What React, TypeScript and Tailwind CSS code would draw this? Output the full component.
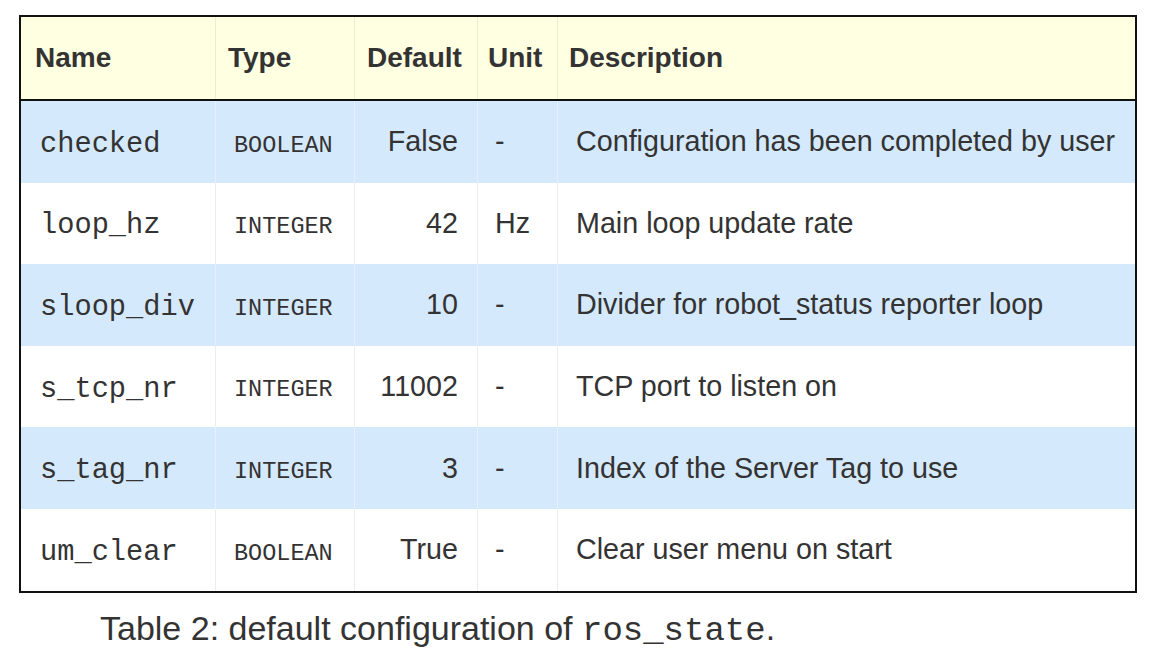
const rows = [
  { name: 'checked', type: 'boolean', def: 'False', unit: '-', desc: 'Configuration has been completed by user' },
  { name: 'loop_hz', type: 'integer', def: '42', unit: 'Hz', desc: 'Main loop update rate' },
  { name: 'sloop_div', type: 'integer', def: '10', unit: '-', desc: 'Divider for robot_status reporter loop' },
  { name: 's_tcp_nr', type: 'integer', def: '11002', unit: '-', desc: 'TCP port to listen on' },
  { name: 's_tag_nr', type: 'integer', def: '3', unit: '-', desc: 'Index of the Server Tag to use' },
  { name: 'um_clear', type: 'boolean', def: 'True', unit: '-', desc: 'Clear user menu on start' },
];

const sans = "font-['Liberation_Sans',Arial,sans-serif]";
const mono = "font-['Liberation_Mono','Courier_New',monospace]";

export default function App() {
  return (
    <div className={`min-h-[656px] w-[1156px] bg-white pt-[15px] text-[#333] ${sans}`}>
      <div className="ml-[19px] w-[1118px] border-[2.5px] border-[#111]">
        {/* Header */}
        <div className="grid h-[84px] grid-cols-[194px_139px_123px_80px_1fr] border-b-2 border-[#111] bg-[#ffffe1] text-[28px] font-bold">
          <div className="flex items-center pl-[14px]">Name</div>
          <div className="flex items-center border-l border-[#ececd4] pl-[12px]">Type</div>
          <div className="flex items-center border-l border-[#ececd4] pl-[12px]">Default</div>
          <div className="flex items-center border-l border-[#ececd4] pl-[10px]">Unit</div>
          <div className="flex items-center border-l border-[#ececd4] pl-[11px]">Description</div>
        </div>

        {rows.map((r, i) => {
          const blue = i % 2 === 0;
          const line = blue ? 'border-[#e4f0fd]' : 'border-[#ededed]';
          return (
            <div
              key={r.name}
              className={`grid h-[81.6px] grid-cols-[194px_139px_123px_80px_1fr] text-[28.7px] ${blue ? 'bg-[#d5e9fc]' : 'bg-white'}`}
            >
              <div className={`flex items-center pl-[19px] pt-[5px] ${mono}`}>{r.name}</div>
              <div className={`flex items-center border-l ${line} pl-[18px] pt-[7px] text-[23.5px] uppercase ${mono}`}>{r.type}</div>
              <div className={`flex items-center justify-end border-l ${line} pr-[19px]`}>{r.def}</div>
              <div className={`flex items-center border-l ${line} pl-[17px]`}>{r.unit}</div>
              <div className={`flex items-center border-l ${line} pl-[18px]`}>{r.desc}</div>
            </div>
          );
        })}
      </div>

      <p className="mt-[18px] pl-[100px] text-[34px] leading-none">
        Table 2: default configuration of <span className={mono}>ros_state</span>.
      </p>
    </div>
  );
}
